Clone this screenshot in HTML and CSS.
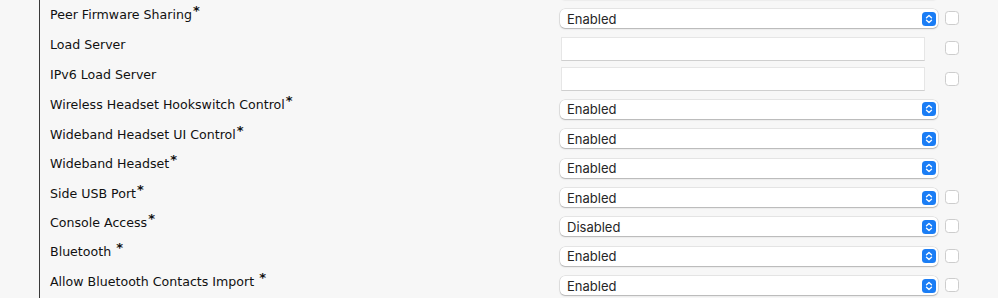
FILE: index.html
```html
<!DOCTYPE html>
<html lang="en">
<head>
  <meta charset="UTF-8">
  <title>Phone Settings</title>
  <link rel="stylesheet" href="styles.css">
</head>
<body>
  <div class="page">
    <div class="gutter"></div>
    <div class="settings">
      <div class="row row-sel">
        <div class="label"></div>
        <div class="select"><span></span><span class="arrows"><svg width="8" height="10" viewBox="0 0 8 10"><path d="M1.5 3.8 4 1.5 6.5 3.8M1.5 6.2 4 8.5 6.5 6.2" fill="none" stroke="#fff" stroke-width="1.3" stroke-linecap="round" stroke-linejoin="round"/></svg></span></div>
      </div>
      <div class="row row-sel">
        <div class="label">Peer Firmware Sharing<sup>*</sup></div>
        <div class="select"><span>Enabled</span><span class="arrows"><svg width="8" height="10" viewBox="0 0 8 10"><path d="M1.5 3.8 4 1.5 6.5 3.8M1.5 6.2 4 8.5 6.5 6.2" fill="none" stroke="#fff" stroke-width="1.3" stroke-linecap="round" stroke-linejoin="round"/></svg></span></div>
        <div class="check"></div>
      </div>
      <div class="row row-txt">
        <div class="label">Load Server</div>
        <div class="field"><input type="text" class="input"></div>
        <div class="check"></div>
      </div>
      <div class="row row-txt">
        <div class="label">IPv6 Load Server</div>
        <div class="field"><input type="text" class="input"></div>
        <div class="check"></div>
      </div>
      <div class="row row-sel">
        <div class="label">Wireless Headset Hookswitch Control<sup>*</sup></div>
        <div class="select"><span>Enabled</span><span class="arrows"><svg width="8" height="10" viewBox="0 0 8 10"><path d="M1.5 3.8 4 1.5 6.5 3.8M1.5 6.2 4 8.5 6.5 6.2" fill="none" stroke="#fff" stroke-width="1.3" stroke-linecap="round" stroke-linejoin="round"/></svg></span></div>
      </div>
      <div class="row row-sel">
        <div class="label">Wideband Headset UI Control<sup>*</sup></div>
        <div class="select"><span>Enabled</span><span class="arrows"><svg width="8" height="10" viewBox="0 0 8 10"><path d="M1.5 3.8 4 1.5 6.5 3.8M1.5 6.2 4 8.5 6.5 6.2" fill="none" stroke="#fff" stroke-width="1.3" stroke-linecap="round" stroke-linejoin="round"/></svg></span></div>
      </div>
      <div class="row row-sel">
        <div class="label">Wideband Headset<sup>*</sup></div>
        <div class="select"><span>Enabled</span><span class="arrows"><svg width="8" height="10" viewBox="0 0 8 10"><path d="M1.5 3.8 4 1.5 6.5 3.8M1.5 6.2 4 8.5 6.5 6.2" fill="none" stroke="#fff" stroke-width="1.3" stroke-linecap="round" stroke-linejoin="round"/></svg></span></div>
      </div>
      <div class="row row-sel">
        <div class="label">Side USB Port<sup>*</sup></div>
        <div class="select"><span>Enabled</span><span class="arrows"><svg width="8" height="10" viewBox="0 0 8 10"><path d="M1.5 3.8 4 1.5 6.5 3.8M1.5 6.2 4 8.5 6.5 6.2" fill="none" stroke="#fff" stroke-width="1.3" stroke-linecap="round" stroke-linejoin="round"/></svg></span></div>
        <div class="check"></div>
      </div>
      <div class="row row-sel">
        <div class="label">Console Access<sup>*</sup></div>
        <div class="select"><span>Disabled</span><span class="arrows"><svg width="8" height="10" viewBox="0 0 8 10"><path d="M1.5 3.8 4 1.5 6.5 3.8M1.5 6.2 4 8.5 6.5 6.2" fill="none" stroke="#fff" stroke-width="1.3" stroke-linecap="round" stroke-linejoin="round"/></svg></span></div>
        <div class="check"></div>
      </div>
      <div class="row row-sel">
        <div class="label">Bluetooth <sup>*</sup></div>
        <div class="select"><span>Enabled</span><span class="arrows"><svg width="8" height="10" viewBox="0 0 8 10"><path d="M1.5 3.8 4 1.5 6.5 3.8M1.5 6.2 4 8.5 6.5 6.2" fill="none" stroke="#fff" stroke-width="1.3" stroke-linecap="round" stroke-linejoin="round"/></svg></span></div>
        <div class="check"></div>
      </div>
      <div class="row row-sel">
        <div class="label">Allow Bluetooth Contacts Import <sup>*</sup></div>
        <div class="select"><span>Enabled</span><span class="arrows"><svg width="8" height="10" viewBox="0 0 8 10"><path d="M1.5 3.8 4 1.5 6.5 3.8M1.5 6.2 4 8.5 6.5 6.2" fill="none" stroke="#fff" stroke-width="1.3" stroke-linecap="round" stroke-linejoin="round"/></svg></span></div>
        <div class="check"></div>
      </div>
    </div>
  </div>
</body>
</html>
```

FILE: styles.css
```css
* { box-sizing: border-box; }
html, body { height: 100%; }
body {
  margin: 0;
  background: #f7f7f7;
  overflow: hidden;
}
.page {
  display: flex;
  min-height: 100%;
}
.gutter {
  width: 40px;
  flex: none;
  border-right: 1.5px solid #3a3a3a;
}
.settings {
  padding-left: 10px;
  margin-top: -25.1px;
}
.row {
  display: flex;
  align-items: center;
}
.row-sel { height: 29.4px; }
.row-txt { height: 30.5px; }
.label {
  width: 510px;
  flex: none;
  margin-bottom: 9px;
  font-family: "DejaVu Sans", Verdana, sans-serif;
  font-size: 12.6px;
  color: #111;
  white-space: nowrap;
}
.label sup {
  font-size: 13px;
  font-weight: bold;
  line-height: 0;
  vertical-align: 4px;
  margin-left: 1px;
}
.select {
  width: 378px;
  height: 19px;
  flex: none;
  display: flex;
  align-items: center;
  justify-content: space-between;
  padding: 0 2.5px 0 7px;
  background: #fff;
  border-radius: 5px;
  box-shadow: 0 0 0 0.5px rgba(0,0,0,0.14), 0 1px 1.5px rgba(0,0,0,0.22);
  font-family: Inter, "Liberation Sans", sans-serif;
  font-size: 13px;
  color: #262626;
}
.arrows {
  width: 14px;
  height: 14px;
  border-radius: 3.5px;
  background: #1a7df5;
  display: flex;
  align-items: center;
  justify-content: center;
}
.field {
  width: 385px;
  flex: none;
  padding-left: 1px;
}
.input {
  display: block;
  width: 364px;
  height: 24px;
  margin: 0;
  padding: 0 6px;
  background: #fff;
  border: 1px solid #e6e6e6;
  border-bottom: 1.5px solid #cfcfcf;
  border-radius: 0;
  outline: none;
}
.check {
  width: 14px;
  height: 14px;
  flex: none;
  margin-left: 7px;
  margin-bottom: 1px;
  background: #fff;
  border: 1px solid #cdcdcd;
  border-radius: 3.5px;
}
.row-txt .check { margin-left: 0; }
```
